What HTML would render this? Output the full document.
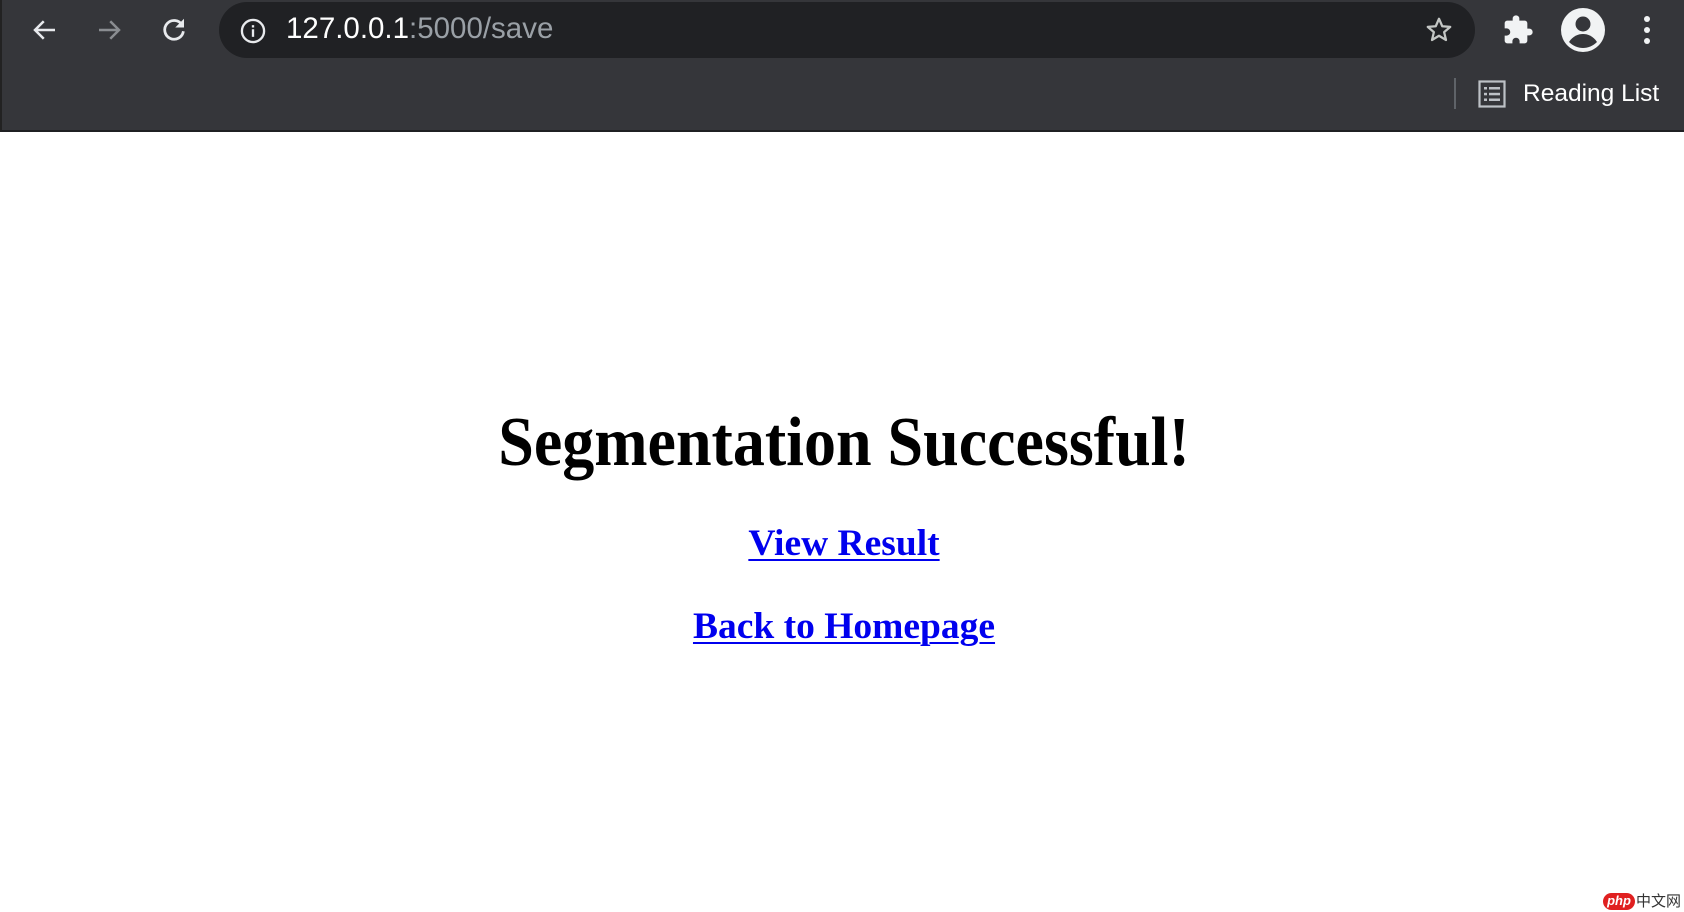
<!DOCTYPE html>
<html><head><meta charset="utf-8"><style>
*{margin:0;padding:0;box-sizing:border-box}
html,body{width:1684px;height:912px;overflow:hidden;background:#fff;position:relative}
.bar{position:absolute;left:0;top:0;width:1684px;height:132px;background:#35363a;border-bottom:2px solid #1f2023;border-left:2px solid #222}
.omni{position:absolute;left:217px;top:2px;width:1256px;height:56px;background:#202124;border-radius:28px}
.url{position:absolute;left:284px;top:12px;font:29.5px "Liberation Sans",sans-serif;color:#fff;line-height:34px}
.url span{color:#9aa0a6}
.rl{position:absolute;left:1521px;top:79px;font:24.5px "Liberation Sans",sans-serif;color:#fff;line-height:30px}
.sep{position:absolute;left:1452px;top:78px;width:2px;height:31px;background:#5f6368}
svg{position:absolute}
.t{position:absolute;left:0;width:1684px;text-align:center;font-family:"Liberation Serif",serif;font-weight:bold;white-space:nowrap}
.t a{color:#0000ee;text-decoration:underline;text-decoration-thickness:2px;text-underline-offset:4px}
</style></head><body>
<div class="bar">
<svg style="left:28px;top:15px" width="30" height="30" viewBox="0 0 24 24"><path d="M20 12H5M11 5l-7 7 7 7" stroke="#e8eaed" stroke-width="2" fill="none"/></svg>
<svg style="left:92px;top:15px" width="30" height="30" viewBox="0 0 24 24"><path d="M4 12h15M13 5l7 7-7 7" stroke="#8a8d91" stroke-width="2" fill="none"/></svg>
<svg style="left:157px;top:15px" width="30" height="30" viewBox="0 0 24 24"><path d="M18.5 8A7.5 7.5 0 1 0 19.5 13" stroke="#e8eaed" stroke-width="2.2" fill="none"/><path d="M20 3v7h-7z" fill="#e8eaed"/></svg>
<div class="omni"></div>
<svg style="left:237px;top:17px" width="28" height="28" viewBox="0 0 24 24"><circle cx="12" cy="12" r="9.5" stroke="#e8eaed" stroke-width="2" fill="none"/><rect x="11" y="10.5" width="2" height="6.5" fill="#e8eaed"/><rect x="11" y="7" width="2" height="2" fill="#e8eaed"/></svg>
<div class="url">127.0.0.1<span>:5000/save</span></div>
<svg style="left:1422px;top:15px" width="30" height="30" viewBox="0 0 24 24"><path d="M12 3l2.6 6 6.4.5-4.9 4.2 1.5 6.3L12 16.6 6.4 20l1.5-6.3L3 9.5l6.4-.5z" stroke="#c4c7c5" stroke-width="1.8" fill="none" stroke-linejoin="round"/></svg>
<svg style="left:1500px;top:14px" width="32" height="32" viewBox="0 0 24 24"><path d="M20.5 11H19V7c0-1.1-.9-2-2-2h-4V3.5a2.5 2.5 0 0 0-5 0V5H4c-1.1 0-2 .9-2 2v3.8h1.5a2.7 2.7 0 0 1 0 5.4H2V20c0 1.1.9 2 2 2h3.8v-1.5a2.7 2.7 0 0 1 5.4 0V22H17c1.1 0 2-.9 2-2v-4h1.5a2.5 2.5 0 0 0 0-5z" fill="#f1f3f4"/></svg>
<svg style="left:1559px;top:8px" width="44" height="44" viewBox="0 0 44 44"><circle cx="22" cy="22" r="22" fill="#f1f3f4"/><circle cx="22" cy="16" r="7.5" fill="#35363a"/><path d="M8 34c4-6 9-8 14-8s10 2 14 8c-4 4-9 6-14 6s-10-2-14-6z" fill="#35363a"/></svg>
<svg style="left:1640px;top:14px" width="10" height="32" viewBox="0 0 10 32"><circle cx="5" cy="5" r="3" fill="#f1f3f4"/><circle cx="5" cy="16" r="3" fill="#f1f3f4"/><circle cx="5" cy="27" r="3" fill="#f1f3f4"/></svg>
<div class="sep"></div>
<svg style="left:1476px;top:80px" width="28" height="28" viewBox="0 0 28 28"><rect x="1.5" y="1.5" width="25" height="25" fill="none" stroke="#bdc1c6" stroke-width="2.2"/><rect x="6" y="7" width="3" height="2.5" fill="#bdc1c6"/><rect x="11" y="7" width="11" height="2.5" fill="#bdc1c6"/><rect x="6" y="12.8" width="3" height="2.5" fill="#bdc1c6"/><rect x="11" y="12.8" width="11" height="2.5" fill="#bdc1c6"/><rect x="6" y="18.5" width="3" height="2.5" fill="#bdc1c6"/><rect x="11" y="18.5" width="11" height="2.5" fill="#bdc1c6"/></svg>
<div class="rl">Reading List</div>
</div>
<div class="t" style="top:410px;left:2px;font-size:64px;line-height:64px;transform:scaleY(1.1);color:#000">Segmentation Successful!</div>
<div class="t" style="top:525px;left:2px;font-size:37.5px;line-height:37px"><a>View Result</a></div>
<div class="t" style="top:608px;left:2px;font-size:37.5px;line-height:37px"><a>Back to Homepage</a></div>
<div style="position:absolute;left:1603px;top:893px;width:32px;height:17px;background:#e02020;border-radius:9px;color:#fff;font:italic bold 13px 'Liberation Sans',sans-serif;text-align:center;line-height:16px">php</div>
<div style="position:absolute;left:1636px;top:892px;font:15px 'Noto Sans CJK SC',sans-serif;color:#333;line-height:18px">中文网</div>
</body></html>
